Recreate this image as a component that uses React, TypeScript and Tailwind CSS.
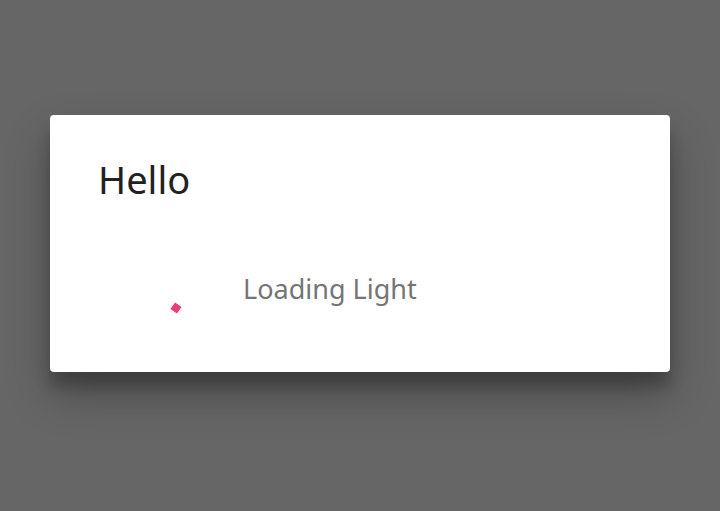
export default function App() {
  return (
    <div className="w-[720px] h-[511px] bg-[#666666] flex items-start justify-center pt-[115px]" style={{ fontFamily: '"Noto Sans", sans-serif' }}>
      <div className="w-[620px] h-[257px] bg-white rounded-[4px] shadow-[0_22px_44px_rgba(0,0,0,0.28),0_15px_14px_rgba(0,0,0,0.20)] flex flex-col pl-[48px] pt-[38px]">
        <div className="text-[38px] leading-[52px] text-[#212121]">Hello</div>
        <div className="flex items-center mt-[64px]">
          <div className="w-[145px] h-[40px] relative">
            <div className="absolute left-[74px] top-[35px] w-[8px] h-[8px] bg-[#f03a78] rotate-[35deg]" />
          </div>
          <div className="text-[27px] leading-[40px] text-[#757575]">Loading Light</div>
        </div>
      </div>
    </div>
  );
}
